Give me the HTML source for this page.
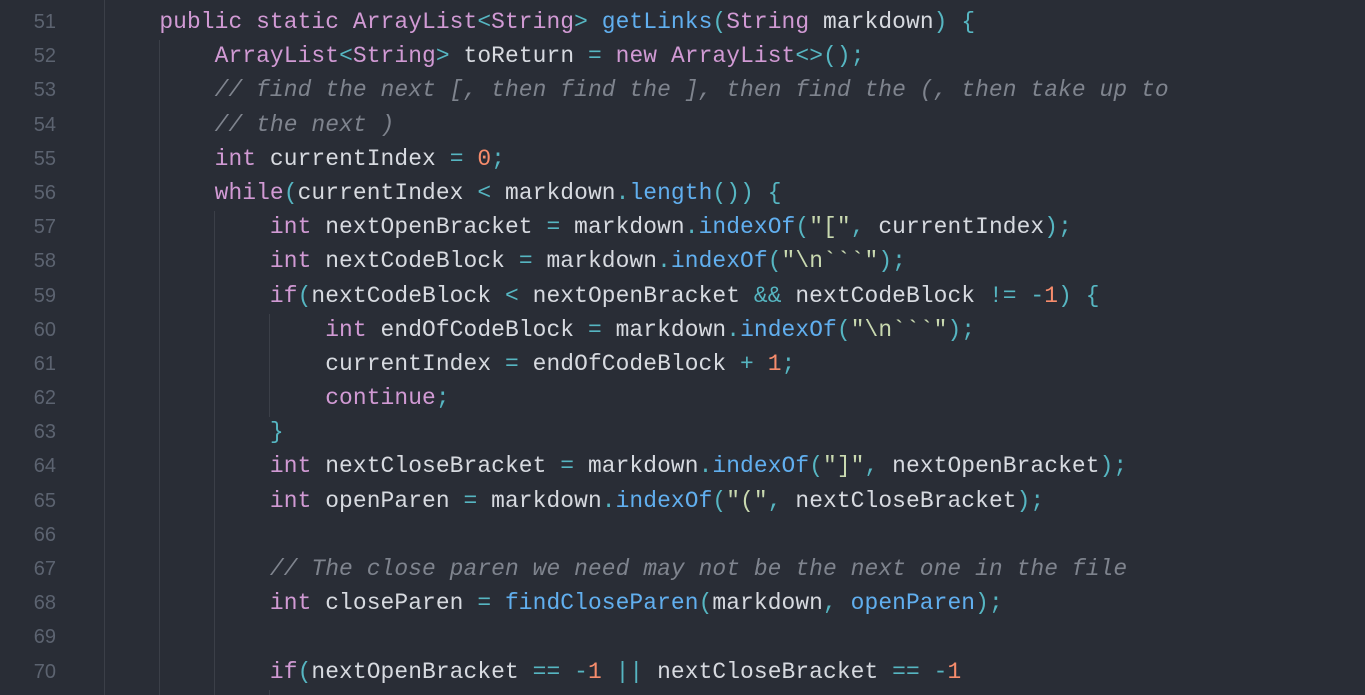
<!DOCTYPE html>
<html><head><meta charset="utf-8"><style>
html,body{margin:0;padding:0;background:#292d36;width:1365px;height:695px;overflow:hidden}
.wrap{position:relative;width:1365px;height:695px}
.ln{position:absolute;left:0;width:56px;text-align:right;color:#5c6370;font:20px "Liberation Sans",sans-serif}
.code{position:absolute;left:104px;font:22.9px "Liberation Mono",monospace;color:#d7dae0;letter-spacing:0.09px}
.l{height:34.2px;line-height:34.2px;white-space:pre}
.k{color:#d19ad4}.o{color:#56b6c2}.f{color:#61afef}.n{color:#f78c6c}.c{color:#7f848e;font-style:italic}.s{color:#c9d9b0}
.g{position:absolute;width:1px;background:#3b3f48}
</style></head><body><div class="wrap">
<div class="g" style="left:104px;top:0;height:695px"></div>
<div class="g" style="left:159px;top:40px;height:655px"></div>
<div class="g" style="left:214px;top:211px;height:484px"></div>
<div class="g" style="left:269px;top:314px;height:103px"></div>
<div class="g" style="left:269px;top:690px;height:5px"></div>
<div class="ln" style="top:5px"><div class="l">51</div><div class="l">52</div><div class="l">53</div><div class="l">54</div><div class="l">55</div><div class="l">56</div><div class="l">57</div><div class="l">58</div><div class="l">59</div><div class="l">60</div><div class="l">61</div><div class="l">62</div><div class="l">63</div><div class="l">64</div><div class="l">65</div><div class="l">66</div><div class="l">67</div><div class="l">68</div><div class="l">69</div><div class="l">70</div></div>
<div class="code" style="top:-29.2px"><div class="l">    <span class="o">}</span></div><div class="l">    <span class="k">public static ArrayList</span><span class="o">&lt;</span><span class="k">String</span><span class="o">&gt;</span> <span class="f">getLinks</span><span class="o">(</span><span class="k">String</span> markdown<span class="o">)</span> <span class="o">{</span></div><div class="l">        <span class="k">ArrayList</span><span class="o">&lt;</span><span class="k">String</span><span class="o">&gt;</span> toReturn <span class="o">=</span> <span class="k">new ArrayList</span><span class="o">&lt;&gt;();</span></div><div class="l">        <span class="c">// find the next [, then find the ], then find the (, then take up to</span></div><div class="l">        <span class="c">// the next )</span></div><div class="l">        <span class="k">int</span> currentIndex <span class="o">=</span> <span class="n">0</span><span class="o">;</span></div><div class="l">        <span class="k">while</span><span class="o">(</span>currentIndex <span class="o">&lt;</span> markdown<span class="o">.</span><span class="f">length</span><span class="o">())</span> <span class="o">{</span></div><div class="l">            <span class="k">int</span> nextOpenBracket <span class="o">=</span> markdown<span class="o">.</span><span class="f">indexOf</span><span class="o">(</span><span class="s">"["</span><span class="o">,</span> currentIndex<span class="o">);</span></div><div class="l">            <span class="k">int</span> nextCodeBlock <span class="o">=</span> markdown<span class="o">.</span><span class="f">indexOf</span><span class="o">(</span><span class="s">"\n&#96;&#96;&#96;"</span><span class="o">);</span></div><div class="l">            <span class="k">if</span><span class="o">(</span>nextCodeBlock <span class="o">&lt;</span> nextOpenBracket <span class="o">&amp;&amp;</span> nextCodeBlock <span class="o">!=</span> <span class="o">-</span><span class="n">1</span><span class="o">)</span> <span class="o">{</span></div><div class="l">                <span class="k">int</span> endOfCodeBlock <span class="o">=</span> markdown<span class="o">.</span><span class="f">indexOf</span><span class="o">(</span><span class="s">"\n&#96;&#96;&#96;"</span><span class="o">);</span></div><div class="l">                currentIndex <span class="o">=</span> endOfCodeBlock <span class="o">+</span> <span class="n">1</span><span class="o">;</span></div><div class="l">                <span class="k">continue</span><span class="o">;</span></div><div class="l">            <span class="o">}</span></div><div class="l">            <span class="k">int</span> nextCloseBracket <span class="o">=</span> markdown<span class="o">.</span><span class="f">indexOf</span><span class="o">(</span><span class="s">"]"</span><span class="o">,</span> nextOpenBracket<span class="o">);</span></div><div class="l">            <span class="k">int</span> openParen <span class="o">=</span> markdown<span class="o">.</span><span class="f">indexOf</span><span class="o">(</span><span class="s">"("</span><span class="o">,</span> nextCloseBracket<span class="o">);</span></div><div class="l"> </div><div class="l">            <span class="c">// The close paren we need may not be the next one in the file</span></div><div class="l">            <span class="k">int</span> closeParen <span class="o">=</span> <span class="f">findCloseParen</span><span class="o">(</span>markdown<span class="o">,</span> <span class="f">openParen</span><span class="o">);</span></div><div class="l"> </div><div class="l">            <span class="k">if</span><span class="o">(</span>nextOpenBracket <span class="o">==</span> <span class="o">-</span><span class="n">1</span> <span class="o">||</span> nextCloseBracket <span class="o">==</span> <span class="o">-</span><span class="n">1</span></div></div>
</div></body></html>
